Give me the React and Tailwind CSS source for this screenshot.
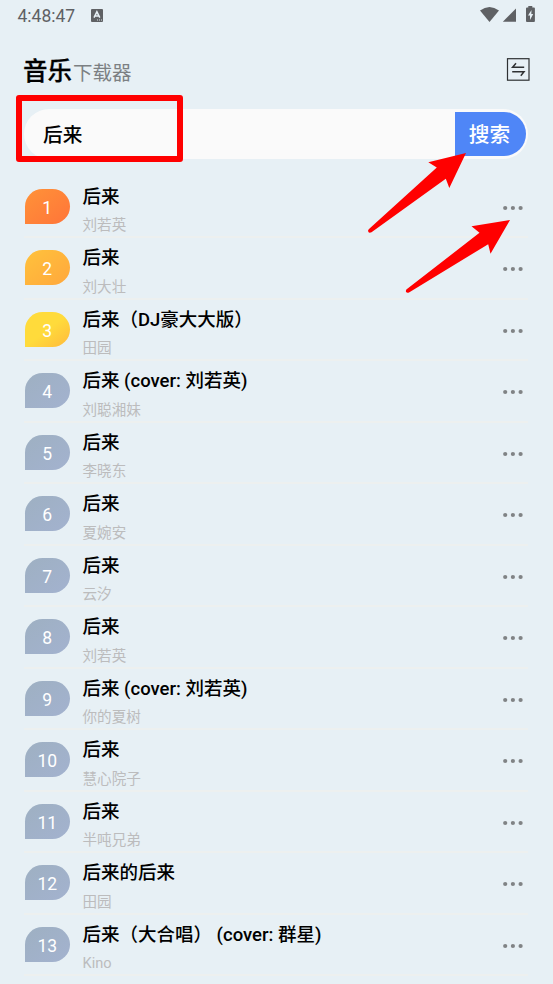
const songs = [
  { title: '后来', artist: '刘若英' },
  { title: '后来', artist: '刘大壮' },
  { title: '后来（DJ豪大大版）', artist: '田园' },
  { title: '后来 (cover: 刘若英)', artist: '刘聪湘妹' },
  { title: '后来', artist: '李晓东' },
  { title: '后来', artist: '夏婉安' },
  { title: '后来', artist: '云汐' },
  { title: '后来', artist: '刘若英' },
  { title: '后来 (cover: 刘若英)', artist: '你的夏树' },
  { title: '后来', artist: '慧心院子' },
  { title: '后来', artist: '半吨兄弟' },
  { title: '后来的后来', artist: '田园' },
  { title: '后来（大合唱） (cover: 群星)', artist: 'Kino' },
];

const badgeColors = [
  'bg-linear-to-br from-[#ff9238] to-[#ff7439]',
  'bg-linear-to-br from-[#ffc23c] to-[#ffa73c]',
  'bg-linear-to-br from-[#ffdb3b] from-50% to-[#ffb93c]',
];

function StatusBar() {
  return (
    <div className="flex h-[31px] items-center justify-between pr-[17px] pl-[17.5px] text-[#5f6164]">
      <div className="flex items-center gap-[16px]">
        <span className="w-[57.5px] text-[17.5px] leading-[30px] whitespace-nowrap">4:48:47</span>
        <svg className="-mt-px h-[13px] w-[12px]" viewBox="0 0 12 13">
          <rect width="12" height="13" rx="1" fill="#5f6164" />
          <path d="M3 8.6 5.9 2.8 8.8 8.6M4.1 7h3.6" fill="none" stroke="#e7f0f5" strokeWidth="1.5" />
          <path d="M6 11h1M8 11h1M10 11h1" stroke="#e7f0f5" strokeWidth="0.9" />
        </svg>
      </div>
      <svg className="-mt-px h-[18px] w-[56px]" viewBox="480 6 56 18" fill="#5f6164">
        <path d="M480 10.600Q489.500 3.600 499 10.600L489.500 22.100Z" />
        <path d="M516 8.500V21.700H502.800Z" />
        <path d="M528.300 7.500V6.100H532.300V7.500H534Q534.900 7.500 534.900 8.500V20.900Q534.900 21.900 534 21.900H527Q526 21.900 526 20.900V8.500Q526 7.500 527 7.500Z" />
        <path d="M531.500 10 528 15.500H530V20L533.200 14H531.300Z" fill="#e7f0f5" />
      </svg>
    </div>
  );
}

function Header() {
  return (
    <header className="flex h-[78px] items-center justify-between pr-[23px] pl-[23px]">
      <h1 className="flex items-baseline gap-[1px] pt-[5px] whitespace-nowrap">
        <span className="text-[24.5px] leading-[36px] font-medium text-black [-webkit-text-stroke:0.3px_black]">
          音乐
        </span>
        <span className="text-[19.5px] leading-[36px] text-[#7c8083]">下载器</span>
      </h1>
      <svg className="h-[24px] w-[24px]" viewBox="0 0 24 24" fill="none" stroke="#2f3133">
        <rect x="1.500" y="0.700" width="21.500" height="21.500" strokeWidth="1.200" />
        <path d="M18.200 9.300H6.600L10 5.300M6.200 13.700H18L14.800 17.700" strokeWidth="1.500" />
      </svg>
    </header>
  );
}

function SearchBar() {
  return (
    <div className="mx-[24px] flex h-[50px] w-[504px] items-center justify-between rounded-full bg-[#fafafa] py-[3px] pr-[2px] pl-[19px]">
      <span className="pt-[3px] text-[19.7px] leading-[31px] font-medium text-black">后来</span>
      <button className="flex h-[44px] w-[71px] items-center justify-center rounded-r-full bg-[#4f86f7] pt-[2px] pr-[2px] text-[20.7px] leading-[30px] font-medium text-white">
        搜索
      </button>
    </div>
  );
}

function SongRow({ song, index }) {
  return (
    <li className="flex h-[61.5px] items-center border-b-2 border-[#edf0ef]">
      <span
        className={`ml-[0.5px] flex h-[35px] w-[45.5px] items-center justify-center rounded-[18px] rounded-bl-none pt-[3px] text-[17.5px] leading-[20px] text-white ${
          badgeColors[index] ?? 'bg-linear-to-br from-[#9eb0c2] to-[#a3b2cf]'
        }`}
      >
        {index + 1}
      </span>
      <div className="ml-[12.5px] flex flex-1 flex-col pt-[8.5px] whitespace-nowrap">
        <span className="text-[18.5px] leading-[28.5px] font-medium text-black">{song.title}</span>
        <span className="mt-[1px] text-[14.6px] leading-[26px] text-[#bcbcbd]">{song.artist}</span>
      </div>
      <svg className="mt-[3px] mr-[4px] h-[6px] w-[22px]" viewBox="0 0 22 6" fill="#808385">
        <circle cx="3.200" cy="3" r="2.100" />
        <circle cx="10.900" cy="3" r="2.100" />
        <circle cx="18.600" cy="3" r="2.100" />
      </svg>
    </li>
  );
}

export default function App() {
  return (
    <main className="relative h-[984px] w-[553px] overflow-hidden bg-[#e7f0f5] font-['Roboto','Noto_Sans_CJK_SC',sans-serif]">
      <StatusBar />
      <Header />
      <SearchBar />
      <ul className="mt-[17.5px] ml-[24px] w-[504px]">
        {songs.map((song, index) => (
          <SongRow key={index} song={song} index={index} />
        ))}
      </ul>
      <div className="absolute top-[95px] left-[16px] h-[67px] w-[167px] rounded-[3px] border-6 border-[#ff0000]" />
      <svg className="absolute top-[140px] left-[350px] h-[160px] w-[170px]" viewBox="350 140 170 160" fill="#ff0000">
        <path d="M466 153 449.300 188 445.800 178.700 371.500 232.300Q369 233.500 368.200 231.500 367.600 230 369 229L436.800 167.500 428.300 162.200Z" />
        <path d="M510 220 490.500 253.700 488.200 244.200 409 292.500Q406.800 293.500 406 291.700 405.500 290 407 289L479.500 232.800 471.500 226.200Z" />
      </svg>
    </main>
  );
}
